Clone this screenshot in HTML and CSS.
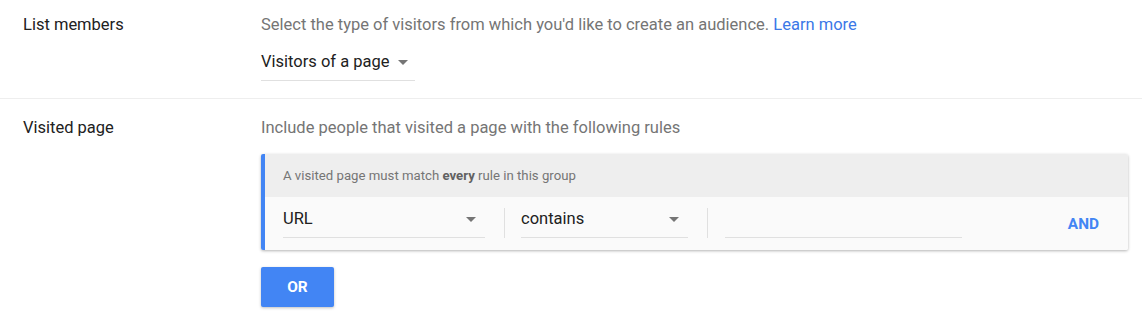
FILE: index.html
```html
<!DOCTYPE html>
<html>
<head>
<meta charset="utf-8">
<link rel="stylesheet" href="styles.css">
</head>
<body>
<div class="row row-first">
  <div class="label">List members</div>
  <div class="content">
    <div class="desc">Select the type of visitors from which you'd like to create an audience. <a class="link" href="#">Learn more</a></div>
    <div class="dropdown">
      <span class="dropdown-text">Visitors of a page</span>
      <span class="arrow"></span>
    </div>
  </div>
</div>
<div class="row row-second">
  <div class="label">Visited page</div>
  <div class="content">
    <div class="desc">Include people that visited a page with the following rules</div>
    <div class="card">
      <div class="card-header">A visited page must match <b>every</b> rule in this group</div>
      <div class="card-body">
        <div class="field field-url"><span>URL</span><span class="arrow"></span></div>
        <div class="sep"></div>
        <div class="field field-op"><span>contains</span><span class="arrow"></span></div>
        <div class="sep sep-last"></div>
        <div class="field field-input"></div>
        <div class="and">AND</div>
      </div>
    </div>
    <button class="or">OR</button>
  </div>
</div>
</body>
</html>
```

FILE: styles.css
```css
* { box-sizing: border-box; }
html, body { margin: 0; padding: 0; background: #fff; }
body {
  font-family: Roboto, "Liberation Sans", Arial, sans-serif;
  font-size: 16.5px;
  line-height: 20px;
  color: #212121;
  width: 1142px;
  height: 324px;
  overflow: hidden;
}
.row { display: flex; }
.row-first {
  padding: 15px 0 17px;
  border-bottom: 1px solid #eeeeee;
}
.row-second { padding: 19px 0 0; }
.label {
  width: 261px;
  padding-left: 23px;
  flex-shrink: 0;
}
.content { flex: 1; }
.desc { color: #757575; }
.link { color: #3b78e7; text-decoration: none; }
.dropdown {
  margin-top: 17px;
  display: flex;
  align-items: center;
  width: 154px;
  padding-bottom: 8px;
  border-bottom: 1px solid #e0e0e0;
}
.dropdown .arrow { margin-left: 9px; }
.arrow {
  width: 0;
  height: 0;
  border-left: 5px solid transparent;
  border-right: 5px solid transparent;
  border-top: 5px solid #757575;
}
.card {
  margin-top: 16px;
  width: 867px;
  border-left: 4px solid #4285f4;
  border-radius: 2px;
  box-shadow: 0 1px 3px rgba(0,0,0,0.3);
  overflow: hidden;
}
.card-header {
  background: #eeeeee;
  font-size: 13.2px;
  line-height: 16px;
  color: #757575;
  padding: 14px 18px 13px;
}
.card-header b { color: #616161; font-weight: 700; }
.card-body {
  background: #fafafa;
  display: flex;
  align-items: center;
  padding: 11px 29px 12px 18px;
}
.field {
  height: 30px;
  padding: 1px 0 8px;
  border-bottom: 1px solid #e0e0e0;
  display: flex;
  align-items: center;
  justify-content: space-between;
  align-self: flex-start;
}
.field .arrow { margin-right: 9px; }
.field-url { width: 202px; }
.field-op { width: 167px; }
.field-input { width: 237px; }
.sep {
  width: 1px;
  height: 30px;
  background: #e0e0e0;
  margin: 0 16px 0 19px;
  align-self: flex-start;
}
.sep-last { margin-right: 17px; }
.and {
  margin-left: auto;
  margin-top: 2px;
  font-size: 15.4px;
  font-weight: 700;
  color: #4285f4;
}
.or {
  display: block;
  margin-top: 17px;
  width: 73px;
  height: 40px;
  background: #4285f4;
  color: #fff;
  border: none;
  border-radius: 2px;
  font-family: Roboto, "Liberation Sans", Arial, sans-serif;
  font-size: 15.4px;
  font-weight: 700;
  box-shadow: 0 1px 3px rgba(0,0,0,0.25);
  padding: 0;
}
```
